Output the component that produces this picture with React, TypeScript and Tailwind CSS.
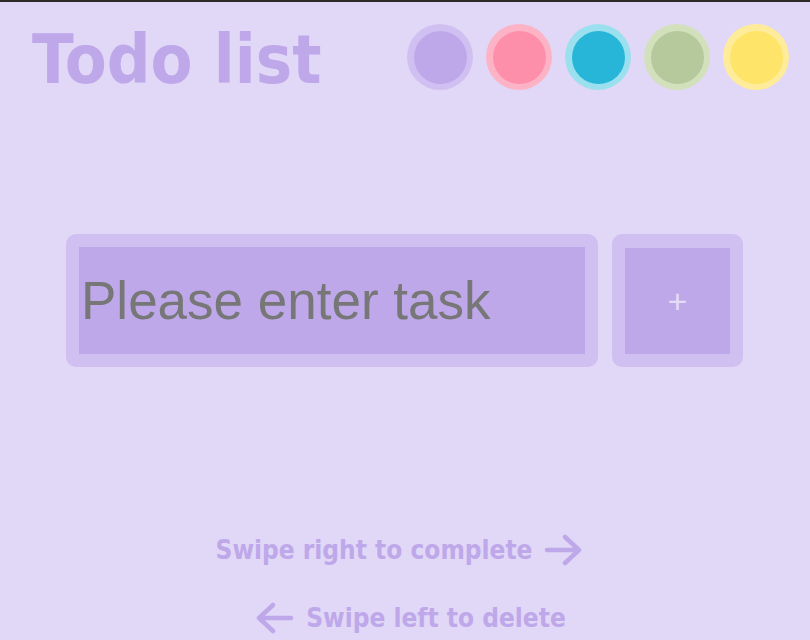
import React from "react";

const swatches = [
  { ring: "bg-[#d0c0f2]", fill: "bg-[#bea8ea]" },
  { ring: "bg-[#fdb3c6]", fill: "bg-[#fe8fab]" },
  { ring: "bg-[#9be0ef]", fill: "bg-[#28b6d8]" },
  { ring: "bg-[#d2e1bb]", fill: "bg-[#b6c99c]" },
  { ring: "bg-[#feec9b]", fill: "bg-[#fee469]" },
];

function Arrow({ dir }: { dir: "left" | "right" }) {
  return (
    <svg
      width="38"
      height="32"
      viewBox="0 0 38 32"
      fill="none"
      stroke="#bea8ea"
      strokeWidth="4.5"
      strokeLinecap="round"
      strokeLinejoin="round"
      className={dir === "left" ? "-scale-x-100" : ""}
    >
      <path d="M3 16 H35 M21 3 L35 16 L21 29" />
    </svg>
  );
}

export default function App() {
  return (
    <div className="flex h-[640px] w-full flex-col overflow-hidden border-t-2 border-[#2b2a28] bg-[#e1d7f6] font-['DejaVu_Sans_Condensed','DejaVu_Sans',sans-serif] font-stretch-condensed">
      <header className="flex h-[88px] items-end justify-between pl-8 pr-[21px]">
        <h1 className="h-[60px] text-[68px] font-bold leading-[60px] text-[#bea8ea]">Todo list</h1>
        <div className="flex gap-[13px]">
          {swatches.map((s, i) => (
            <div key={i} className={`flex h-[66px] w-[66px] items-center justify-center rounded-full ${s.ring}`}>
              <div className={`h-[53px] w-[53px] rounded-full ${s.fill}`} />
            </div>
          ))}
        </div>
      </header>

      <div className="mt-[144px] flex justify-center gap-[14px] pr-[1px]">
        <div className="rounded-[10px] bg-[#d0c0f2] p-[13px]">
          <input
            placeholder="Please enter task"
            className="block h-[107px] w-[506px] bg-[#bea8ea] pl-[2px] font-['Liberation_Sans',Arial,sans-serif] text-[53px] text-[#777777] outline-none placeholder:text-[#777777]"
          />
        </div>
        <button className="rounded-[10px] bg-[#d0c0f2] p-[13px]">
          <span className="flex h-[106px] w-[105px] items-center justify-center bg-[#bea8ea] font-['Liberation_Sans',Arial,sans-serif] text-[34px] leading-none text-[#e4dbf6]">
            +
          </span>
        </button>
      </div>

      <div className="mt-[167px] flex flex-col items-center gap-[36px] text-[26px] font-bold leading-[32px] text-[#bea8ea]">
        <div className="flex items-center gap-[12px] pr-[12px]">
          <span>Swipe right to complete</span>
          <Arrow dir="right" />
        </div>
        <div className="flex items-center gap-[12px] pl-[12px]">
          <Arrow dir="left" />
          <span>Swipe left to delete</span>
        </div>
      </div>
    </div>
  );
}
